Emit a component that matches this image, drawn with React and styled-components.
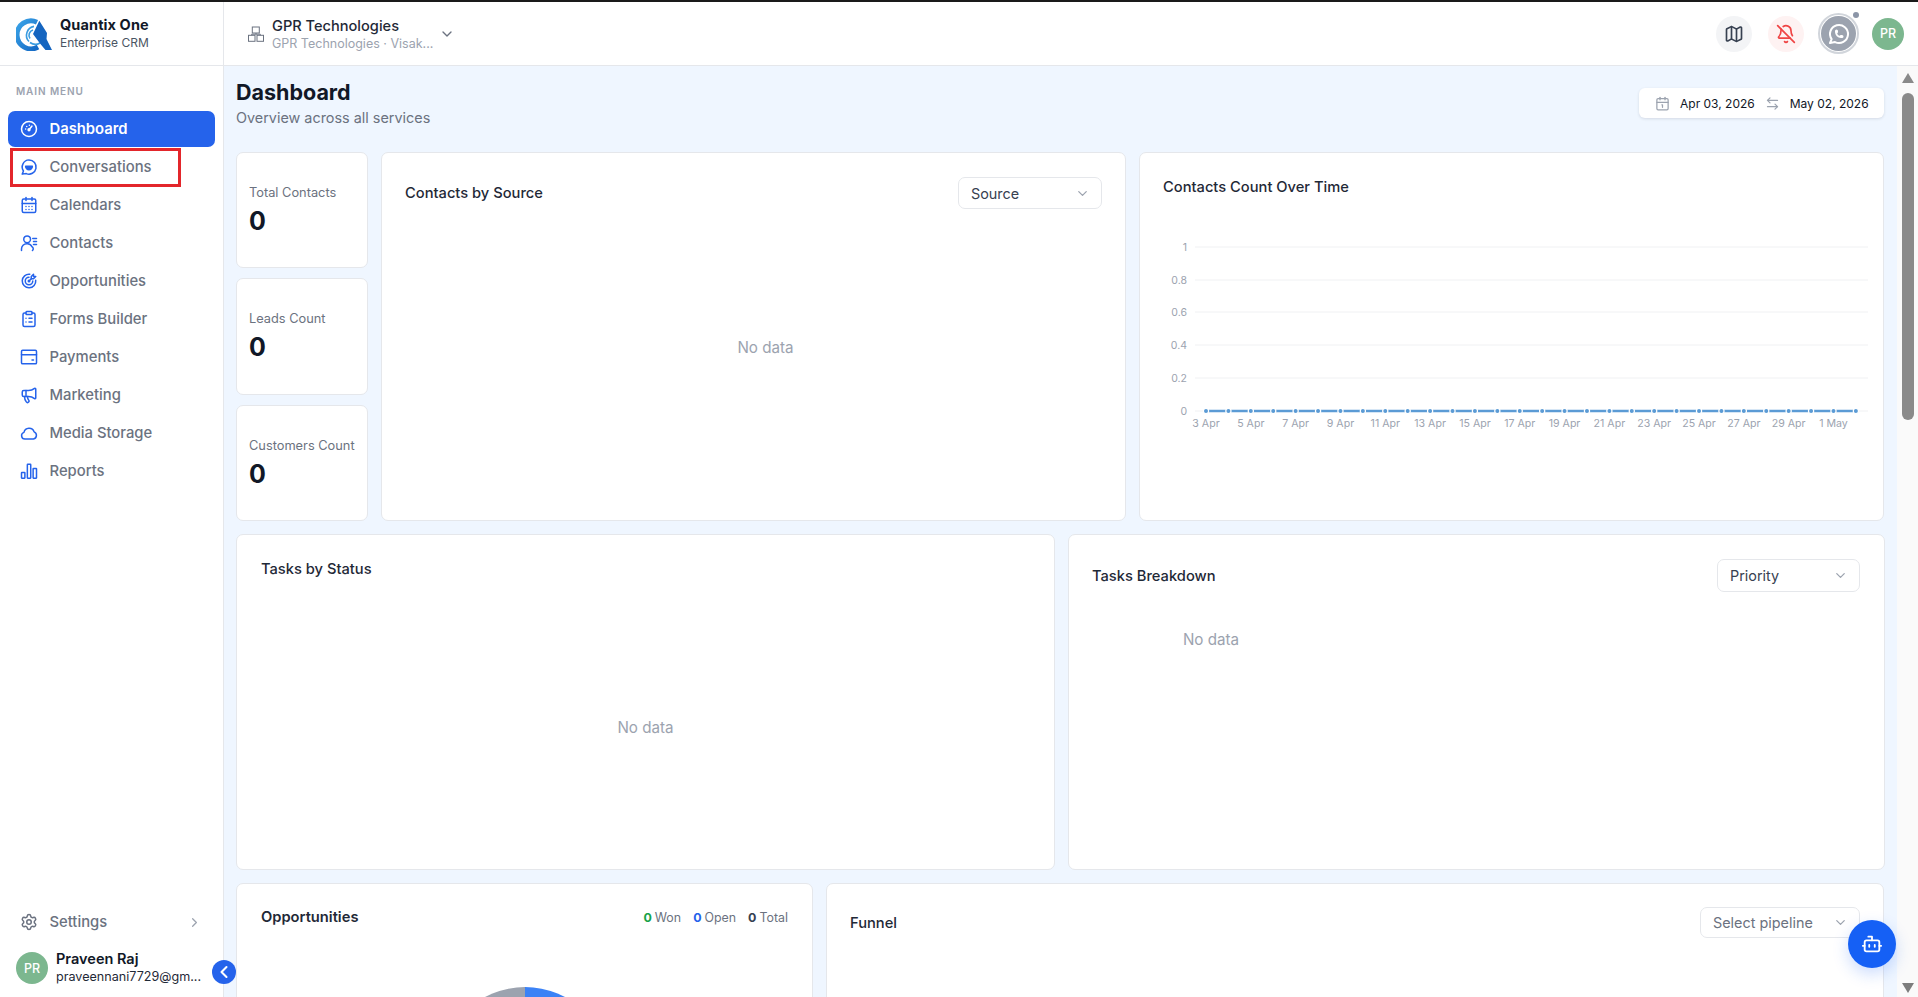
import React from "react";
import styled, { createGlobalStyle } from "styled-components";
import {
  ArrowLeftRight, BellOff, Bot, Calendar1, CalendarDays, ChevronDown, ChevronLeft, ChevronRight,
  ClipboardList, Map as MapIcon, Megaphone, Settings,
} from "lucide-react";
import { TbBrandWhatsapp, TbTargetArrow } from "react-icons/tb";

const FONT = `Inter, "Noto Sans", "Liberation Sans", sans-serif`;

const Global = createGlobalStyle`
  html, body { margin: 0; height: 100%; overflow: hidden; background: #fff; }
  #root { height: 100%; }
  * { box-sizing: border-box; }
  body { font-family: ${FONT}; color: #111827; }
`;

const Shell = styled.div`
  height: 100vh; display: flex; flex-direction: column; position: relative; overflow: hidden;
`;
const BlackEdge = styled.div`height: 2px; background: #1a1a1a; flex: none;`;
const Frame = styled.div`flex: 1; min-height: 0; display: flex;`;

const Sidebar = styled.aside`
  width: 224px; flex: none; display: flex; flex-direction: column; position: relative;
  background: #fff; border-right: 1px solid #e5e7eb;
`;
const Brand = styled.div`
  height: 64px; flex: none; display: flex; align-items: center; gap: 8px; padding: 0 0 0 16px;
  border-bottom: 1px solid #e5e7eb;
`;
const BrandName = styled.div`font-size: 14.5px; line-height: 18px; font-weight: 700; color: #111827; letter-spacing: .1px;`;
const BrandSub = styled.div`font-size: 12px; line-height: 18px; color: #4b5563;`;
const MenuLabel = styled.div`
  margin: 18px 0 13px 16px; font-size: 10px; line-height: 14px; font-weight: 600; letter-spacing: .9px; color: #9ca3af;
`;
const Nav = styled.nav`display: flex; flex-direction: column; gap: 2px; padding: 0 8px;`;
const NavItem = styled.div`
  height: 36px; display: flex; align-items: center; gap: 11.5px; padding: 0 13px 0 12px; position: relative;
  border-radius: 7px; font-size: 14.8px;
  font-weight: ${p => (p.$active ? 600 : 500)};
  color: ${p => (p.$active ? "#fff" : "#6b7280")};
  background: ${p => (p.$active ? "#2563eb" : "transparent")};
  svg { flex: none; }
`;
const IconSlot = styled.span`width: 18px; height: 18px; display: flex; color: ${p => p.$color || "#2563eb"};`;
const Annotation = styled.span`
  position: absolute; left: 1.5px; top: -1px; width: 171px; height: 38.5px; border: 3px solid #e3262b; pointer-events: none;
`;
const SideFooter = styled.div`margin-top: auto; display: flex; flex-direction: column;`;
const SettingsWrap = styled.div`padding: 0 8px; margin-bottom: 12px;`;
const Trail = styled.span`margin-left: auto; display: flex; color: #9ca3af;`;
const Profile = styled.div`display: flex; align-items: flex-start; gap: 8px; padding: 0 0 11px 16px;`;
const Avatar = styled.div`
  width: 32px; height: 32px; border-radius: 50%; background: #7cb78f; color: #fff; flex: none;
  display: flex; align-items: center; justify-content: center; font-size: 12.5px; font-weight: 500;
`;
const ProfileText = styled.div`min-width: 0; margin-top: -2px;`;
const ProfileName = styled.div`font-size: 14.5px; line-height: 18px; font-weight: 600; color: #111827;`;
const ProfileMail = styled.div`font-size: 12.6px; line-height: 18px; color: #1f2937; white-space: nowrap;`;
const Collapse = styled.button`
  position: absolute; right: -12.5px; bottom: 13px; width: 24px; height: 24px; border: 0; padding: 0; border-radius: 50%;
  background: #2563eb; color: #fff; display: flex; align-items: center; justify-content: center; z-index: 3;
`;

const Workspace = styled.div`flex: 1; min-width: 0; display: flex; flex-direction: column;`;
const Header = styled.header`
  height: 64px; flex: none; display: flex; align-items: center; background: #fff; border-bottom: 1px solid #e5e7eb;
  padding: 0 14px 0 24px;
`;
const OrgIcon = styled.span`display: flex; color: #6b7280; margin-right: 8px;`;
const OrgText = styled.div`width: 160px; margin-top: 2px;`;
const OrgName = styled.div`font-size: 14.6px; line-height: 18px; font-weight: 500; color: #1f2937;`;
const OrgSub = styled.div`font-size: 12.5px; line-height: 18px; color: #9ca3af; white-space: nowrap;`;
const OrgChevron = styled.span`display: flex; color: #6b7280; margin: 0 0 0 7px;`;
const HeaderActions = styled.div`margin-left: auto; display: flex; align-items: center;`;
const RoundBtn = styled.div`
  width: 36px; height: 36px; border-radius: 50%; display: flex; align-items: center; justify-content: center;
  background: ${p => p.$bg}; color: ${p => p.$fg}; margin-right: ${p => p.$mr || 16}px;
`;
const WhatsappWrap = styled.div`
  position: relative; width: 41px; height: 41px; border-radius: 50%; border: 2px solid #d1d5db; padding: 1px; margin-right: 13px;
`;
const WhatsappCore = styled.div`
  width: 100%; height: 100%; border-radius: 50%; background: #9ca3af; color: #fff; display: flex; align-items: center; justify-content: center;
`;
const StatusDot = styled.span`
  position: absolute; top: -3px; right: -2px; width: 6px; height: 6px; border-radius: 50%; background: #8b95a7;
`;

const Body = styled.div`flex: 1; min-height: 0; display: flex; position: relative;`;
const Main = styled.main`
  flex: 1; min-width: 0; overflow: hidden; background: #eff6ff; padding: 13px 13px 0 12px;
  display: flex; flex-direction: column; gap: 13px;
`;
const PageHead = styled.div`flex: none; height: 60px; display: flex; justify-content: space-between; align-items: flex-start;`;
const PageTitle = styled.h1`margin: 0; font-size: 21.5px; line-height: 26px; font-weight: 700; color: #111827;`;
const PageSub = styled.div`margin-top: 3px; font-size: 14.4px; line-height: 20px; color: #6b7280;`;
const DateBox = styled.div`
  margin-top: 9px; width: 245px; height: 30px; display: flex; align-items: center; background: #fff; border-radius: 6px;
  padding: 0 16px; box-shadow: 0 1px 3px rgba(17, 24, 39, .12); font-size: 12px; font-weight: 400; color: #111827; white-space: nowrap;
`;
const DateGray = styled.span`display: flex; color: #9ca3af; margin: ${p => p.$m};`;

const Row = styled.section`
  flex: none; display: grid; gap: 13px; grid-template-columns: ${p => p.$cols}; height: ${p => p.$h}px;
`;
const StatStack = styled.div`display: flex; flex-direction: column; gap: 10px; min-height: 0;`;
const Card = styled.div`
  background: #fff; border: 1px solid #e5e7eb; border-radius: 7px; min-width: 0; min-height: 0; overflow: hidden;
`;
const StatCard = styled(Card)`flex: 1; padding: 31px 12px 0;`;
const StatLabel = styled.div`font-size: 12.8px; line-height: 18px; color: #6b7280; white-space: nowrap;`;
const StatValue = styled.div`margin-top: 4px; font-size: 25px; line-height: 30px; font-weight: 700; color: #111827;`;
const CardHead = styled.div`
  display: flex; align-items: center; justify-content: space-between;
  padding: ${p => p.$top || 24}px ${p => p.$pad || 23}px 0 ${p => p.$pl || p.$pad || 23}px;
  min-height: ${p => p.$h || 44}px;
`;
const CardTitle = styled.h3`
  margin: 0; font-size: 14.7px; line-height: 20px; color: #1f2937;
  font-weight: ${p => (p.$strong ? 600 : 500)};
`;
const Select = styled.div`
  width: ${p => p.$w}px; height: ${p => p.$h || 32}px; display: flex; align-items: center; justify-content: space-between;
  padding: 0 11px 0 12px; background: #fff; border: 1px solid #e5e7eb; border-radius: 7px;
  font-size: 14.4px; color: ${p => p.$muted ? "#6b7280" : "#374151"};
  svg { color: #9ca3af; }
`;
const NoData = styled.div`
  height: ${p => p.$h}px; width: ${p => p.$w || "100%"}; margin-left: ${p => p.$ml || 0}px; display: flex; align-items: center; justify-content: center;
  font-size: 15.2px; color: #9ca3af;
`;
const LineChart = styled.svg`display: block;`;
const OppStats = styled.div`display: flex; gap: 12px; font-size: 12.4px; color: #6b7280;`;
const OppNum = styled.b`font-weight: 700; color: ${p => p.$c}; margin-right: 3px;`;
const PieWrap = styled.div`display: flex; justify-content: center; margin-top: 60px;`;

const Scrollbar = styled.div`
  width: 21px; flex: none; background: #fafafa; padding: 7px 4px 4px 5px; display: flex; flex-direction: column; align-items: center;
`;
const ArrowUp = styled.span`
  width: 0; height: 0; border-left: 6.5px solid transparent; border-right: 6.5px solid transparent; border-bottom: 10px solid #8a8a8a;
`;
const ArrowDown = styled.span`
  width: 0; height: 0; margin-top: auto; border-left: 6.5px solid transparent; border-right: 6.5px solid transparent; border-top: 10px solid #7d7d7d;
`;
const Thumb = styled.span`width: 12px; height: 327px; margin-top: 10px; background: #8a8a8a; border-radius: 6px;`;
const Fab = styled.button`
  position: absolute; right: 22px; bottom: 29px; width: 48px; height: 48px; border: 0; border-radius: 50%; padding: 0; z-index: 4;
  background: #1560f5; color: #fff; display: flex; align-items: center; justify-content: center;
  box-shadow: 0 6px 16px rgba(21, 96, 245, .22);
`;

const Logo = () => (
  <svg width="36" height="34" viewBox="0 0 36 34" fill="none">
    <defs>
      <linearGradient id="lg" x1="0" y1="0" x2="1" y2="1">
        <stop offset="0" stopColor="#3ba4e8" />
        <stop offset="1" stopColor="#1368c4" />
      </linearGradient>
    </defs>
    <path d="M21 5.2A14 14 0 1 0 22 30" stroke="url(#lg)" strokeWidth="5" />
    <path d="M18 9.4A9 9 0 0 0 13 24.5" stroke="#3a9ce0" strokeWidth="1.6" />
    <path d="M17 13A5.5 5.5 0 0 0 14 21.5" stroke="#3a9ce0" strokeWidth="1.6" />
    <path d="M14 25.5A9 9 0 0 0 24 26" stroke="#3a9ce0" strokeWidth="1.6" />
    <path d="M23.3 3.7L31 16l-.5 6L36 33h-6.5L24 26.5 17 17z" fill="#1565c0" />
  </svg>
);
const Ico = ({ children }) => (
  <svg width="18" height="18" viewBox="0 0 24 24" fill="none" stroke="currentColor" strokeWidth="2" strokeLinecap="round" strokeLinejoin="round">{children}</svg>
);
const GaugeIco = () => (
  <Ico>
    <circle cx="12" cy="12" r="10" />
    <path d="M12 13l4-5" />
    <circle cx="12" cy="13" r="1.2" fill="currentColor" />
    <path d="M7.5 12v.01M9 8.5v.01M12.5 7v.01" />
  </Ico>
);
const ChatIco = () => (
  <Ico>
    <path d="M12 2.5a9.5 9.5 0 1 1-3.6 18.3L3 21.5l1.6-4.2A9.5 9.5 0 0 1 12 2.5z" />
    <path d="M7.5 11h9a4.5 4.5 0 0 1-9 0z" fill="currentColor" />
  </Ico>
);
const ContactIco = () => (
  <Ico>
    <circle cx="9.5" cy="7" r="4.5" />
    <path d="M2 22v-2a7 7 0 0 1 7-7h1a7 7 0 0 1 6 4 3 3 0 0 1 .6 5" />
    <path d="M17 6h5M18 10h4M18 14h4" />
  </Ico>
);
const CardIco = () => (
  <Ico>
    <rect x="2" y="3" width="20" height="18" rx="1.5" />
    <path d="M2 9h20M16 16h2" />
  </Ico>
);
const CloudIco = () => (
  <Ico>
    <path d="M6.5 20a4.5 4.5 0 0 1-1.2-8.8 7 7 0 0 1 13.5-.7A5 5 0 0 1 18 20z" />
  </Ico>
);
const BarsIco = () => (
  <Ico>
    <rect x="2" y="14" width="4.5" height="7.5" rx=".5" />
    <rect x="9.8" y="3" width="4.5" height="18.5" rx=".5" />
    <rect x="17.5" y="8.5" width="4.5" height="13" rx=".5" />
  </Ico>
);
const OrgGlyph = () => (
  <svg width="16" height="16" viewBox="0 0 16 16" fill="none" stroke="currentColor" strokeWidth="1">
    <rect x="4.3" y="1" width="7" height="6" />
    <rect x=".5" y="9.3" width="6.5" height="6" />
    <rect x="9" y="9.3" width="6.5" height="6" />
    <path d="M8 7v1.2M3.7 9.3V8.2h8.6v1.1" />
  </svg>
);

const navItems = [
  ["Dashboard", <GaugeIco />],
  ["Conversations", <ChatIco />],
  ["Calendars", <CalendarDays size={18} />],
  ["Contacts", <ContactIco />],
  ["Opportunities", <TbTargetArrow size={18} />],
  ["Forms Builder", <ClipboardList size={18} />],
  ["Payments", <CardIco />],
  ["Marketing", <Megaphone size={18} />],
  ["Media Storage", <CloudIco />],
  ["Reports", <BarsIco />],
];

const gridY = [[1, 50], [0.8, 83], [0.6, 115], [0.4, 148], [0.2, 181], [0, 214]];
const pts = Array.from({ length: 30 }, (_, i) => 66 + i * 22.41);
const xLabels = ["3 Apr", "5 Apr", "7 Apr", "9 Apr", "11 Apr", "13 Apr", "15 Apr", "17 Apr", "19 Apr", "21 Apr", "23 Apr", "25 Apr", "27 Apr", "29 Apr", "1 May"];

const CountChart = () => (
  <LineChart width="743" height="250" viewBox="0 0 743 250" fontFamily={FONT}>
    {gridY.map(([v, y]) => (
      <g key={v}>
        <line x1="55" x2="728" y1={y} y2={y} stroke="#f0f1f3" />
        <text x="47" y={y + 3.5} textAnchor="end" fontSize="10.5" fill="#9ca3af">{v}</text>
      </g>
    ))}
    <line x1={pts[0]} x2={pts[29]} y1="214" y2="214" stroke="#5b9bd5" strokeWidth="2.4" />
    {pts.map(x => <circle key={x} cx={x} cy="214" r="2.6" fill="#5b9bd5" stroke="#fff" strokeWidth="1.2" />)}
    {xLabels.map((t, i) => (
      <text key={t} x={pts[i * 2]} y="229.5" textAnchor="middle" fontSize="10.6" fill="#9ca3af">{t}</text>
    ))}
  </LineChart>
);

const Pie = () => (
  <svg width="170" height="170" viewBox="0 0 170 170">
    <path d="M85 85V0a85 85 0 0 1 0 170z" fill="#3b82f6" />
    <path d="M85 85V170a85 85 0 0 1 0-170z" fill="#9ca3af" />
  </svg>
);

export default function App() {
  return (
    <Shell>
      <Global />
      <BlackEdge />
      <Frame>
        <Sidebar>
          <Brand>
            <Logo />
            <div>
              <BrandName>Quantix One</BrandName>
              <BrandSub>Enterprise CRM</BrandSub>
            </div>
          </Brand>
          <MenuLabel>MAIN MENU</MenuLabel>
          <Nav>
            {navItems.map(([label, icon], i) => (
              <NavItem key={label} $active={i === 0}>
                <IconSlot $color={i === 0 ? "#fff" : undefined}>{icon}</IconSlot>
                {label}
                {label === "Conversations" && <Annotation />}
              </NavItem>
            ))}
          </Nav>
          <SideFooter>
            <SettingsWrap>
              <NavItem>
                <IconSlot $color="#6b7280"><Settings size={18} /></IconSlot>
                Settings
                <Trail><ChevronRight size={15} /></Trail>
              </NavItem>
            </SettingsWrap>
            <Profile>
              <Avatar>PR</Avatar>
              <ProfileText>
                <ProfileName>Praveen Raj</ProfileName>
                <ProfileMail>praveennani7729@gm...</ProfileMail>
              </ProfileText>
            </Profile>
          </SideFooter>
          <Collapse aria-label="Collapse"><ChevronLeft size={20} strokeWidth={2.5} /></Collapse>
        </Sidebar>
        <Workspace>
          <Header>
            <OrgIcon><OrgGlyph /></OrgIcon>
            <OrgText>
              <OrgName>GPR Technologies</OrgName>
              <OrgSub>GPR Technologies · Visak...</OrgSub>
            </OrgText>
            <OrgChevron><ChevronDown size={16} /></OrgChevron>
            <HeaderActions>
              <RoundBtn $bg="#f3f4f6" $fg="#374151"><MapIcon size={20} /></RoundBtn>
              <RoundBtn $bg="#fef2f2" $fg="#ef4444" $mr={14}><BellOff size={20} /></RoundBtn>
              <WhatsappWrap>
                <WhatsappCore><TbBrandWhatsapp size={24} /></WhatsappCore>
                <StatusDot />
              </WhatsappWrap>
              <Avatar>PR</Avatar>
            </HeaderActions>
          </Header>
          <Body>
            <Main>
              <PageHead>
                <div>
                  <PageTitle>Dashboard</PageTitle>
                  <PageSub>Overview across all services</PageSub>
                </div>
                <DateBox>
                  <DateGray $m="0 10px 0 0"><Calendar1 size={15} /></DateGray>
                  Apr 03, 2026
                  <DateGray $m="0 10px"><ArrowLeftRight size={15} /></DateGray>
                  May 02, 2026
                </DateBox>
              </PageHead>
              <Row $cols="132px 745px 745px" $h={369}>
                <StatStack>
                  <StatCard><StatLabel>Total Contacts</StatLabel><StatValue>0</StatValue></StatCard>
                  <StatCard><StatLabel>Leads Count</StatLabel><StatValue>0</StatValue></StatCard>
                  <StatCard><StatLabel>Customers Count</StatLabel><StatValue>0</StatValue></StatCard>
                </StatStack>
                <Card>
                  <CardHead $h={56}>
                    <CardTitle>Contacts by Source</CardTitle>
                    <Select $w={144}>Source<ChevronDown size={15} /></Select>
                  </CardHead>
                  <NoData $h={276} $ml={12}>No data</NoData>
                </Card>
                <Card>
                  <CardHead>
                    <CardTitle>Contacts Count Over Time</CardTitle>
                  </CardHead>
                  <CountChart />
                </Card>
              </Row>
              <Row $cols="819px 817px" $h={336}>
                <Card>
                  <CardHead $pad={24}>
                    <CardTitle>Tasks by Status</CardTitle>
                  </CardHead>
                  <NoData $h={296}>No data</NoData>
                </Card>
                <Card>
                  <CardHead $h={57} $pad={24} $pl={23}>
                    <CardTitle>Tasks Breakdown</CardTitle>
                    <Select $w={143} $h={33}>Priority<ChevronDown size={15} /></Select>
                  </CardHead>
                  <NoData $h={94} $w="238px" $ml={23}>No data</NoData>
                </Card>
              </Row>
              <Row $cols="577px 1058px" $h={200}>
                <Card>
                  <CardHead $top={23} $h={43} $pad={24}>
                    <CardTitle $strong>Opportunities</CardTitle>
                    <OppStats>
                      <span><OppNum $c="#16a34a">0</OppNum>Won</span>
                      <span><OppNum $c="#2563eb">0</OppNum>Open</span>
                      <span><OppNum $c="#374151">0</OppNum>Total</span>
                    </OppStats>
                  </CardHead>
                  <PieWrap><Pie /></PieWrap>
                </Card>
                <Card>
                  <CardHead $top={23} $h={54}>
                    <CardTitle>Funnel</CardTitle>
                    <Select $w={160} $h={31} $muted>Select pipeline<ChevronDown size={15} /></Select>
                  </CardHead>
                </Card>
              </Row>
            </Main>
            <Scrollbar>
              <ArrowUp />
              <Thumb />
              <ArrowDown />
            </Scrollbar>
          </Body>
        </Workspace>
      </Frame>
      <Fab aria-label="Assistant"><Bot size={22} /></Fab>
    </Shell>
  );
}
